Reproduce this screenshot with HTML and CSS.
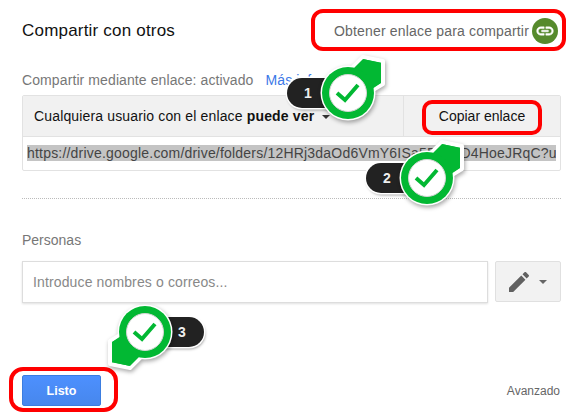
FILE: index.html
```html
<!DOCTYPE html>
<html lang="es">
<head>
    <meta charset="UTF-8">
    <title>Compartir con otros</title>
    <link rel="stylesheet" href="styles.css">
</head>
<body>

<div class="dialog">
    <div class="header">
        <h1>Compartir con otros</h1>
        <div class="get-link">
            <span>Obtener enlace para compartir</span>
            <span class="link-icon">
                <svg viewBox="0 0 24 24" width="20" height="20"><path fill="#fff" stroke="#fff" stroke-width="0.6" d="M3.9 12c0-1.71 1.39-3.1 3.1-3.1h4V7H7c-2.76 0-5 2.24-5 5s2.24 5 5 5h4v-1.9H7c-1.71 0-3.1-1.39-3.1-3.1zM8 13h8v-2H8v2zm9-6h-4v1.9h4c1.71 0 3.1 1.39 3.1 3.1s-1.39 3.1-3.1 3.1h-4V17h4c2.76 0 5-2.24 5-5s-2.24-5-5-5z"/></svg>
            </span>
        </div>
    </div>

    <p class="label link-status">Compartir mediante enlace: activado <a href="#">Más información</a></p>

    <div class="link-box">
        <div class="link-row">
            <div class="link-perm">Cualquiera usuario con el enlace <strong>puede ver</strong><span class="caret caret-dark"></span></div>
            <div class="link-copy">Copiar enlace</div>
        </div>
        <div class="link-url"><span class="selected">https://drive.google.com/drive/folders/12HRj3daOd6VmY6ISa5F7xKD4HoeJRqC?u</span></div>
    </div>

    <div class="separator"></div>

    <p class="label people-label">Personas</p>

    <div class="people-row">
        <div class="people-input">Introduce nombres o correos...</div>
        <div class="perm-button">
            <svg viewBox="3 3 18 18" width="20" height="20"><path fill="#616161" d="M3 17.25V21h3.75L17.81 9.94l-3.75-3.75L3 17.25zM20.71 7.04c.39-.39.39-1.02 0-1.41l-2.34-2.34c-.39-.39-1.02-.39-1.41 0l-1.83 1.83 3.75 3.75 1.83-1.83z"/></svg>
            <span class="caret"></span>
        </div>
    </div>

    <div class="footer">
        <button class="done">Listo</button>
        <span class="advanced">Avanzado</span>
    </div>
</div>

<!-- annotations drawn over the screenshot -->
<div class="outline outline-get"></div>
<div class="outline outline-copy"></div>
<div class="outline outline-done"></div>

<svg width="0" height="0" class="defs">
    <symbol id="pin" viewBox="-40 -40 80 80">
        <polygon points="5,-26 15,-36 35,-32 35,-9 25,-3" fill="#02b833" stroke="#fff" stroke-width="4" stroke-linejoin="round"/>
        <circle r="27.5" fill="#fff"/>
        <polygon points="5,-24 15,-34 33,-30 33,-10 24,-4" fill="#02b833"/>
        <circle r="26" fill="#02b833"/>
        <circle r="18.5" fill="#fff" stroke="#d5d5d5" stroke-width="1"/>
    </symbol>
</svg>

<div class="mark mark-1">
    <span class="pill">1</span>
    <div class="pin">
        <svg width="80" height="80"><use href="#pin"/></svg>
        <svg class="tick" viewBox="-40 -40 80 80" width="80" height="80"><path d="M-11 0 L-3 7 L10 -8"/></svg>
    </div>
</div>
<div class="mark mark-2">
    <span class="pill">2</span>
    <div class="pin">
        <svg width="80" height="80"><use href="#pin"/></svg>
        <svg class="tick" viewBox="-40 -40 80 80" width="80" height="80"><path d="M-11 0 L-3 7 L10 -8"/></svg>
    </div>
</div>
<div class="mark mark-3">
    <span class="pill">3</span>
    <div class="pin pin-flip">
        <svg width="80" height="80"><use href="#pin"/></svg>
        <svg class="tick" viewBox="-40 -40 80 80" width="80" height="80"><path d="M-11 0 L-3 7 L10 -8"/></svg>
    </div>
</div>

</body>
</html>
```

FILE: styles.css
```css
html, body {
    margin: 0;
    height: 100%;
    overflow: hidden;
}

body {
    font-family: 'Liberation Sans', Arial, sans-serif;
    background-color: #fff;
    color: #222;
    position: relative;
}

.dialog {
    padding: 0 18px 0 22px;
}

.header {
    display: flex;
    justify-content: space-between;
    align-items: center;
    height: 60px;
}

h1 {
    margin: 2px 0 0 0;
    font-size: 17px;
    letter-spacing: 0.2px;
    font-weight: normal;
    color: #111;
}

.get-link {
    display: flex;
    align-items: center;
    gap: 3px;
    font-size: 14px;
    letter-spacing: 0.18px;
    color: #666;
    margin-top: 2px;
    margin-right: 3px;
}

.link-icon {
    width: 26px;
    height: 26px;
    border-radius: 50%;
    background-color: #568a2c;
    display: flex;
    align-items: center;
    justify-content: center;
}

.label {
    margin: 0;
    font-size: 14px;
    color: #777;
}

.link-status {
    height: 35px;
    line-height: 40px;
    letter-spacing: 0.1px;
}

.link-status a {
    color: #3b78e7;
    text-decoration: none;
    margin-left: 8px;
}

.link-box {
    border: 1px solid #e2e2e2;
    border-radius: 2px;
    height: 74px;
}

.link-row {
    display: flex;
    height: 40px;
    background-color: #f1f1f1;
    border-bottom: 1px solid #e2e2e2;
    font-size: 14px;
    color: #111;
}

.link-perm {
    width: 381px;
    padding-left: 11px;
    line-height: 40px;
    letter-spacing: 0.15px;
    border-right: 1px solid #e2e2e2;
    box-sizing: border-box;
}

.link-copy {
    flex: 1;
    text-align: center;
    line-height: 40px;
    padding-right: 0;
}

.link-url {
    margin: 8px 4px 0 4px;
    font-size: 14px;
    line-height: 16px;
    letter-spacing: 0.2px;
    color: #444;
    white-space: nowrap;
    overflow: hidden;
}

.selected {
    background-color: #c4c4c4;
}

.separator {
    margin-top: 27px;
    border-top: 1px dotted #bbb;
}

.people-label {
    margin-top: 33px;
    height: 29px;
}

.people-row {
    display: flex;
    gap: 7px;
}

.people-input {
    width: 466px;
    height: 42px;
    box-sizing: border-box;
    border: 1px solid #ddd;
    box-shadow: 0 1px 2px rgba(0, 0, 0, 0.12);
    padding-left: 10px;
    line-height: 40px;
    font-size: 14px;
    letter-spacing: 0.13px;
    color: #888;
}

.perm-button {
    flex: 1;
    height: 41px;
    box-sizing: border-box;
    background-color: #f2f2f2;
    border: 1px solid #e0e0e0;
    border-radius: 2px;
    display: flex;
    align-items: center;
    padding-left: 13px;
    gap: 10px;
}

.caret {
    display: inline-block;
    width: 0;
    height: 0;
    border-left: 4px solid transparent;
    border-right: 4px solid transparent;
    border-top: 4px solid #666;
}

.caret-dark {
    border-top-color: #333;
    margin-left: 8px;
    vertical-align: middle;
}

.footer {
    display: flex;
    justify-content: space-between;
    align-items: center;
    margin-top: 72px;
}

.done {
    width: 79px;
    height: 31px;
    border: 1px solid #3b7de0;
    border-radius: 2px;
    background: linear-gradient(#4d90fe, #4787ed);
    color: #fff;
    font-family: inherit;
    font-size: 12.5px;
    font-weight: bold;
}

.advanced {
    font-size: 12px;
    color: #666;
    margin-right: 1px;
}

/* annotations */
.outline {
    position: absolute;
    box-sizing: border-box;
    border: 4px solid #f00;
    border-radius: 12px;
}

.outline-get {
    left: 311px;
    top: 9px;
    width: 255px;
    height: 42px;
}

.outline-copy {
    left: 422px;
    top: 100px;
    width: 120px;
    height: 35px;
    border-radius: 10px;
}

.outline-done {
    left: 9px;
    top: 367px;
    width: 109px;
    height: 45px;
    border-radius: 14px;
}

.defs {
    position: absolute;
}

.mark {
    position: absolute;
    width: 80px;
    height: 80px;
}

.mark-1 {
    left: 308px;
    top: 53px;
}

.mark-2 {
    left: 387px;
    top: 138px;
}

.mark-3 {
    left: 105px;
    top: 292px;
}

.pill {
    position: absolute;
    top: 25px;
    height: 30px;
    width: 62px;
    box-sizing: border-box;
    border-radius: 15px;
    background-color: #222;
    color: #eee;
    font-size: 14px;
    font-weight: bold;
    line-height: 30px;
    box-shadow: 0 0 0 1.5px #fff, 1px 2px 3px rgba(0, 0, 0, 0.45);
}

.mark-1 .pill, .mark-2 .pill {
    left: -21px;
    padding-left: 17px;
}

.mark-3 .pill {
    left: 37px;
    padding-left: 36px;
}

.pin {
    position: absolute;
    left: 0;
    top: 0;
    width: 80px;
    height: 80px;
    filter: drop-shadow(1px 2px 2px rgba(0, 0, 0, 0.35));
}

.pin svg {
    position: absolute;
    left: 0;
    top: 0;
}

.pin-flip svg:first-child {
    transform: rotate(180deg);
}

.tick path {
    fill: none;
    stroke: #02b833;
    stroke-width: 4;
}
```
